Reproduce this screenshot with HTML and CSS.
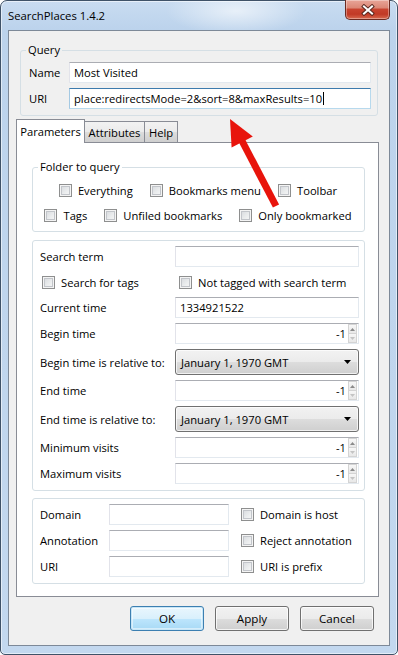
FILE: index.html
```html
<!DOCTYPE html>
<html>
<head>
<meta charset="utf-8">
<title>SearchPlaces</title>
<link rel="stylesheet" href="styles.css">
</head>
<body>
<div class="window">
  <div class="titlebar">
    <span class="title">SearchPlaces 1.4.2</span>
    <div class="close">
      <svg width="14" height="12" viewBox="0 0 14 12"><path d="M3 2.5 L11 9.5 M11 2.5 L3 9.5" stroke="#5a2a22" stroke-width="4" stroke-linecap="square" fill="none"/><path d="M3 2.5 L11 9.5 M11 2.5 L3 9.5" stroke="#fff" stroke-width="2" stroke-linecap="square" fill="none"/></svg>
    </div>
  </div>
  <div class="client">
    <fieldset class="group query">
      <legend>Query</legend>
      <div class="qrow"><span class="qlabel">Name</span><div class="input qinput">Most Visited</div></div>
      <div class="qrow"><span class="qlabel">URI</span><div class="input qinput focused">place:redirectsMode=2&amp;sort=8&amp;maxResults=10<span class="caret"></span></div></div>
    </fieldset>

    <div class="tabs">
      <div class="tab active">Parameters</div>
      <div class="tab attr">Attributes</div>
      <div class="tab help">Help</div>
    </div>

    <div class="panel">
      <fieldset class="group folder">
        <legend>Folder to query</legend>
        <div class="cbrow">
          <span class="cb"><span class="box"></span>Everything</span>
          <span class="cb"><span class="box"></span>Bookmarks menu</span>
          <span class="cb"><span class="box"></span>Toolbar</span>
        </div>
        <div class="cbrow">
          <span class="cb"><span class="box"></span>Tags</span>
          <span class="cb"><span class="box"></span>Unfiled bookmarks</span>
          <span class="cb"><span class="box"></span>Only bookmarked</span>
        </div>
      </fieldset>

      <div class="group params">
        <span class="lbl">Search term</span><div class="input"></div>
        <span class="cb c1"><span class="box"></span>Search for tags</span><span class="cb c2"><span class="box"></span>Not tagged with search term</span>
        <span class="lbl">Current time</span><div class="input">1334921522</div>
        <span class="lbl">Begin time</span>
        <div class="input spin"><span class="val">-1</span><span class="spinner"><span class="sb"><svg width="5" height="3" viewBox="0 0 5 3"><path d="M0 3 L2.5 0 L5 3Z" fill="#8a8a8a"/></svg></span><span class="sb"><svg width="5" height="3" viewBox="0 0 5 3"><path d="M0 0 L2.5 3 L5 0Z" fill="#c4c4c4"/></svg></span></span></div>
        <span class="lbl">Begin time is relative to:</span>
        <div class="select">January 1, 1970 GMT<svg class="dd" width="7" height="4" viewBox="0 0 7 4"><path d="M0 0 L7 0 L3.5 4Z" fill="#000"/></svg></div>
        <span class="lbl">End time</span>
        <div class="input spin"><span class="val">-1</span><span class="spinner"><span class="sb"><svg width="5" height="3" viewBox="0 0 5 3"><path d="M0 3 L2.5 0 L5 3Z" fill="#8a8a8a"/></svg></span><span class="sb"><svg width="5" height="3" viewBox="0 0 5 3"><path d="M0 0 L2.5 3 L5 0Z" fill="#c4c4c4"/></svg></span></span></div>
        <span class="lbl">End time is relative to:</span>
        <div class="select">January 1, 1970 GMT<svg class="dd" width="7" height="4" viewBox="0 0 7 4"><path d="M0 0 L7 0 L3.5 4Z" fill="#000"/></svg></div>
        <span class="lbl">Minimum visits</span>
        <div class="input spin"><span class="val">-1</span><span class="spinner"><span class="sb"><svg width="5" height="3" viewBox="0 0 5 3"><path d="M0 3 L2.5 0 L5 3Z" fill="#8a8a8a"/></svg></span><span class="sb"><svg width="5" height="3" viewBox="0 0 5 3"><path d="M0 0 L2.5 3 L5 0Z" fill="#c4c4c4"/></svg></span></span></div>
        <span class="lbl">Maximum visits</span>
        <div class="input spin"><span class="val">-1</span><span class="spinner"><span class="sb"><svg width="5" height="3" viewBox="0 0 5 3"><path d="M0 3 L2.5 0 L5 3Z" fill="#8a8a8a"/></svg></span><span class="sb"><svg width="5" height="3" viewBox="0 0 5 3"><path d="M0 0 L2.5 3 L5 0Z" fill="#c4c4c4"/></svg></span></span></div>
      </div>

      <div class="group attrs">
        <span class="lbl">Domain</span><div class="input"></div><span class="cb"><span class="box"></span>Domain is host</span>
        <span class="lbl">Annotation</span><div class="input"></div><span class="cb"><span class="box"></span>Reject annotation</span>
        <span class="lbl">URI</span><div class="input"></div><span class="cb"><span class="box"></span>URI is prefix</span>
      </div>
    </div>

    <div class="buttons">
      <div class="btn default">OK</div>
      <div class="btn">Apply</div>
      <div class="btn">Cancel</div>
    </div>
  </div>

  <svg class="annot" width="398" height="655" viewBox="0 0 398 655">
    <line x1="240.5" y1="138" x2="276" y2="206" stroke="#e8140c" stroke-width="7"/>
    <polygon points="230,119 252.8,136.4 231.6,147.6" fill="#e8140c"/>
  </svg>
</div>
</body>
</html>
```
FILE: styles.css
```css
* { box-sizing: border-box; }
html, body { margin: 0; padding: 0; }
body {
  width: 398px;
  height: 655px;
  overflow: hidden;
  background: #ffffff;
  font-family: "Open Sans", "Noto Sans", sans-serif;
  font-size: 11.2px;
  line-height: 15px;
  color: #000;
}

.window {
  position: relative;
  width: 398px;
  height: 655px;
  border: 1px solid #3f5268;
  border-radius: 7px 7px 5px 5px;
  padding: 0 7px 8px;
  display: flex;
  flex-direction: column;
  background:
    radial-gradient(ellipse 70px 24px at 235px 10px, rgba(255,255,255,0.6), rgba(255,255,255,0)),
    linear-gradient(180deg, #c9dcf1 0, #bcd3ec 28px, #c3d8ef 100%);
  box-shadow: inset 0 0 0 1px rgba(255,255,255,0.55);
}

.titlebar {
  height: 29px;
  display: flex;
  align-items: flex-start;
  flex: none;
}
.title {
  padding: 7px 0 0 0;
  font-size: 11.3px;
  color: #000;
}
.close {
  margin-left: auto;
  margin-top: -1px;
  width: 45px;
  height: 20px;
  border: 1px solid #6b2b22;
  border-top: none;
  border-radius: 0 0 5px 5px;
  background: linear-gradient(180deg, #e8a598 0, #dc8877 40%, #c8432f 50%, #c13a26 75%, #d76a50 100%);
  box-shadow: inset 0 0 0 1px rgba(255,255,255,0.35);
  display: flex;
  align-items: center;
  justify-content: center;
}

.client {
  flex: 1;
  border: 1px solid #7d8998;
  background: #f0f0f0;
  display: flex;
  flex-direction: column;
}

.group {
  border: 1px solid #d5dfe5;
  border-radius: 3px;
  margin: 0;
  min-width: 0;
}
fieldset.group > legend {
  padding: 0 2px;
  margin-left: -3px;
  line-height: 14px;
}

.query {
  margin: 12px 11px 0 11px;
  padding: 5px 6px 6px 8px;
  display: flex;
  flex-direction: column;
  gap: 5px;
}
.qrow {
  display: flex;
  align-items: center;
  height: 21px;
}
.qlabel { width: 40px; flex: none; }
.qinput { flex: 1; }

.input {
  height: 21px;
  background: #fff;
  border: 1px solid #e3e9ef;
  border-top-color: #abadb3;
  border-left-color: #e2e3ea;
  padding: 0 4px;
  display: flex;
  align-items: center;
  white-space: nowrap;
}
.input.focused {
  border-color: #b7d9ed;
  border-top-color: #3d7bad;
  border-left-color: #a4c9e3;
}
.caret {
  display: inline-block;
  width: 1px;
  height: 13px;
  background: #000;
  margin-left: 1px;
}

.tabs {
  display: flex;
  align-items: flex-end;
  margin: 3px 0 0 7px;
  height: 23px;
  position: relative;
  z-index: 1;
}
.tab {
  height: 21px;
  border: 1px solid #898c95;
  border-bottom: none;
  border-left: none;
  background: linear-gradient(180deg, #f2f2f2 0, #ebebeb 50%, #dddddd 50%, #cfcfcf 100%);
  display: flex;
  align-items: center;
  justify-content: center;
  padding-top: 1px;
}
.tab.active {
  width: 69px;
  height: 24px;
  margin-bottom: -1px;
  border-left: 1px solid #898c95;
  background: #fff;
  padding-bottom: 1px;
}
.tab.attr { width: 60px; }
.tab.help { width: 33px; }

.panel {
  height: 455px;
  flex: none;
  margin: 0 10px 0 7px;
  border: 1px solid #898c95;
  background: #fff;
  padding: 17px 13px 0 15px;
  display: flex;
  flex-direction: column;
}

.folder {
  padding: 6px 6px 6px 8px;
  display: flex;
  flex-direction: column;
  gap: 5px;
}
.cbrow {
  display: flex;
  justify-content: center;
  gap: 17px;
  height: 20px;
  align-items: center;
  margin-left: -9px;
  margin-right: -6px;
}

.cb {
  display: inline-flex;
  align-items: center;
  gap: 6px;
  white-space: nowrap;
}
.box {
  width: 13px;
  height: 13px;
  flex: none;
  border: 1px solid #8e8f8f;
  background: linear-gradient(135deg, #d3d6da 0, #eceeef 60%, #f8f8f8 100%);
  box-shadow: inset 0 0 0 1px #f4f4f4, inset 0 0 0 2px #c2c5ca;
}

.params {
  margin-top: 8px;
  padding: 5px 5px 6px 7px;
  display: grid;
  grid-template-columns: 135px 1fr;
  grid-template-rows: 21px 20px 21px 21px 26px 21px 26px 21px 21px;
  row-gap: 5px;
  align-items: center;
}
.params .c1 { padding-left: 2px; }
.params .c2 { padding-left: 4px; }
.lbl { white-space: nowrap; }

.spin {
  justify-content: flex-end;
  padding: 0 1px 0 4px;
}
.spin .val { margin-right: 2px; }
.spinner {
  display: flex;
  flex-direction: column;
  width: 9px;
  height: 19px;
}
.sb {
  flex: 1;
  border: 1px solid #d4d4d4;
  background: linear-gradient(180deg, #f7f7f7, #e8e8e8);
  display: flex;
  align-items: center;
  justify-content: center;
}
.sb + .sb { border-top: none; }

.select {
  height: 26px;
  border: 1px solid #707070;
  border-radius: 3px;
  background: linear-gradient(180deg, #f2f2f2 0, #ebebeb 50%, #dddddd 50%, #cfcfcf 100%);
  box-shadow: inset 0 0 0 1px rgba(255,255,255,0.7);
  display: flex;
  align-items: center;
  padding: 0 7px 0 5px;
  white-space: nowrap;
}
.select .dd { margin-left: auto; }

.attrs {
  margin-top: 7px;
  padding: 5px 6px 6px 7px;
  display: grid;
  grid-template-columns: 69px 120px 1fr;
  grid-auto-rows: 21px;
  row-gap: 5px;
  align-items: center;
}
.attrs .cb { padding-left: 12px; }

.buttons {
  display: flex;
  justify-content: flex-end;
  gap: 11px;
  margin: 9px 15px 0 0;
}
.btn {
  width: 74px;
  height: 25px;
  border: 1px solid #707070;
  border-radius: 3px;
  background: linear-gradient(180deg, #f2f2f2 0, #ebebeb 50%, #dddddd 50%, #cfcfcf 100%);
  box-shadow: inset 0 0 0 1px rgba(255,255,255,0.75);
  display: flex;
  align-items: center;
  justify-content: center;
  font-size: 11.6px;
}
.btn.default {
  border-color: #3c7fb1;
  background: linear-gradient(180deg, #eaf6fd 0, #d9f0fc 50%, #bee6fd 50%, #a7d9f5 100%);
  box-shadow: inset 0 0 0 1px #c7e6f7, inset 0 0 0 2px rgba(255,255,255,0.5);
}

.annot {
  position: absolute;
  left: -1px;
  top: -1px;
  pointer-events: none;
}
```
